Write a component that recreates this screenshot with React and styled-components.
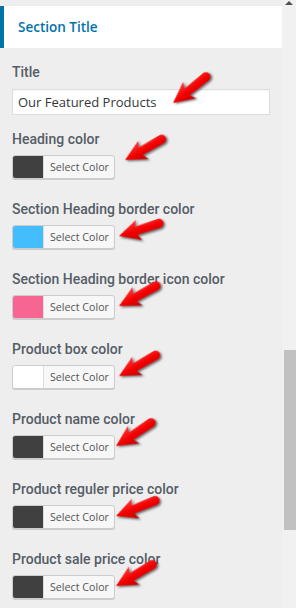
import React from "react";
import styled, { createGlobalStyle } from "styled-components";

const fields = [
  { label: "Heading color", swatch: "#404040", arrow: { x: 113, y: 30, rot: -29 } },
  { label: "Section Heading border color", swatch: "#43bdfb", arrow: { x: 107, y: 36, rot: -17 } },
  { label: "Section Heading border icon color", swatch: "#f76693", arrow: { x: 107, y: 36, rot: -28 } },
  { label: "Product box color", swatch: "#ffffff", arrow: { x: 107, y: 36, rot: -29 } },
  { label: "Product name color", swatch: "#404040", arrow: { x: 104, y: 36, rot: -33 } },
  { label: "Product reguler price color", swatch: "#404040", arrow: { x: 104, y: 36, rot: -21 } },
  { label: "Product sale price color", swatch: "#404040", arrow: { x: 104, y: 36, rot: -30 } },
];

function Arrow({ x, y, rot }) {
  // tip sits at (x, y) of the field, tail points up-right
  return (
    <ArrowSvg
      width="52"
      height="28"
      viewBox="-2 -14 52 28"
      style={{ left: x - 2, top: y - 14, transform: `rotate(${rot}deg)` }}
    >
      <path
        d="M0 0 L21 -10.5 L18 -4.2 L42 -5 A4.6 4.6 0 0 1 42 4.2 L18 4.2 L21 10.5 Z"
        fill="url(#redgrad)"
      />
    </ArrowSvg>
  );
}

export default function App() {
  return (
    <>
      <GlobalStyle />
      <svg width="0" height="0" style={{ position: "absolute" }}>
        <defs>
          <linearGradient id="redgrad" x1="0" y1="0" x2="0" y2="1">
            <stop offset="0" stopColor="#ff3a3a" />
            <stop offset="0.5" stopColor="#f20000" />
            <stop offset="1" stopColor="#c80000" />
          </linearGradient>
        </defs>
      </svg>
      <Page>
        <Panel>
          <Header>Section Title</Header>
          <Fields>
            <Field $after={15}>
              <Label $space={8}>Title</Label>
              <TextInput defaultValue="Our Featured Products" />
              <Arrow x={161} y={40} rot={-38} />
            </Field>
            {fields.map((f) => (
              <Field key={f.label} $after={21}>
                <Label $space={7}>{f.label}</Label>
                <ColorButton type="button">
                  <Swatch $color={f.swatch} />
                  <ButtonText>Select Color</ButtonText>
                </ColorButton>
                <Arrow {...f.arrow} />
              </Field>
            ))}
          </Fields>
        </Panel>
        <Scrollbar>
          <UpArrow />
          <Thumb />
        </Scrollbar>
      </Page>
    </>
  );
}

const GlobalStyle = createGlobalStyle`
  html, body {
    margin: 0;
    padding: 0;
    background: #eeeeee;
    font-family: "Open Sans", "Noto Sans", Arial, sans-serif;
  }
`;

const Page = styled.div`
  display: flex;
  width: 296px;
  height: 608px;
  overflow: hidden;
  background: #eeeeee;
`;

const Panel = styled.div`
  width: 282px;
  display: flex;
  flex-direction: column;
  overflow: hidden;
  & > * {
    flex-shrink: 0;
  }
`;

const Header = styled.div`
  margin-top: 6px;
  height: 42px;
  background: #fff;
  border-left: 4px solid #0073aa;
  padding-left: 14px;
  display: flex;
  align-items: center;
  font-size: 13.5px;
  font-weight: 600;
  color: #0073aa;
  box-sizing: border-box;
`;

const Fields = styled.div`
  display: flex;
  flex-direction: column;
  padding: 15px 12px 0;
`;

const Field = styled.div`
  position: relative;
  flex-shrink: 0;
  display: flex;
  flex-direction: column;
  align-items: flex-start;
  margin-bottom: ${(p) => p.$after}px;
`;

const Label = styled.span`
  font-family: Roboto, "Open Sans", Arial, sans-serif;
  font-size: 14px;
  line-height: 18px;
  font-weight: 500;
  color: #555d66;
  margin-bottom: ${(p) => p.$space}px;
`;

const TextInput = styled.input`
  box-sizing: border-box;
  width: 258px;
  height: 26px;
  border: 1px solid #dddddd;
  background: #fff;
  padding: 0 5px;
  font-family: "Open Sans", "Noto Sans", Arial, sans-serif;
  font-size: 13px;
  color: #32373c;
  outline: none;
  box-shadow: inset 0 1px 2px rgba(0, 0, 0, 0.04);
`;

const ColorButton = styled.button`
  box-sizing: border-box;
  display: flex;
  align-items: stretch;
  height: 24px;
  padding: 0;
  border: 1px solid #cccccc;
  border-radius: 3px;
  background: #f7f7f7;
  box-shadow: 0 1px 0 #cccccc;
  overflow: hidden;
  cursor: pointer;
`;

const Swatch = styled.span`
  width: 30px;
  background: ${(p) => p.$color};
  border-right: 1px solid #dddddd;
`;

const ButtonText = styled.span`
  display: flex;
  align-items: center;
  padding: 0 5px 0 6px;
  font-family: "Open Sans", "Noto Sans", Arial, sans-serif;
  font-size: 10.7px;
  color: #555555;
`;

const ArrowSvg = styled.svg`
  position: absolute;
  transform-origin: 2px 14px;
  overflow: visible;
  filter: drop-shadow(1px 2px 1px rgba(0, 0, 0, 0.55));
`;

const Scrollbar = styled.div`
  width: 14px;
  background: #f1f1f1;
  display: flex;
  flex-direction: column;
  align-items: flex-end;
`;

const UpArrow = styled.div`
  margin: 1px 3px 0 0;
  width: 0;
  height: 0;
  border-left: 4px solid transparent;
  border-right: 4px solid transparent;
  border-bottom: 4px solid #505050;
`;

const Thumb = styled.div`
  margin-top: 345px;
  width: 12px;
  height: 180px;
  background: #c1c1c1;
`;
